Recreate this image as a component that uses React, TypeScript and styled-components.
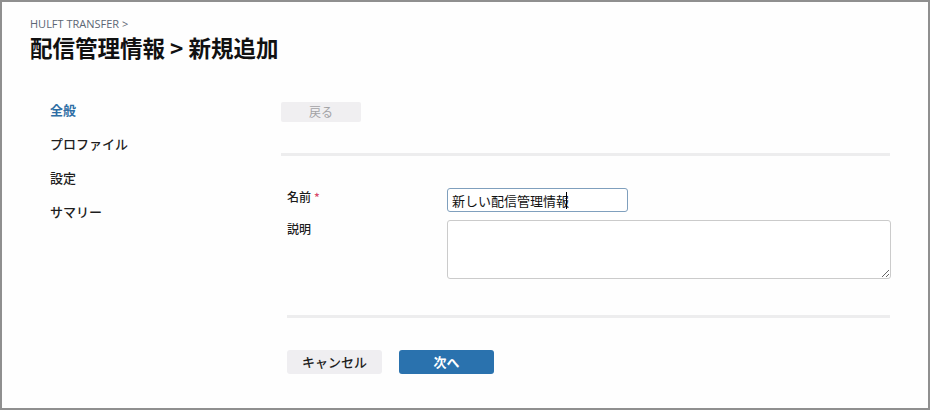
import styled, { createGlobalStyle } from "styled-components";

const GlobalStyle = createGlobalStyle`
  html, body {
    margin: 0;
    padding: 0;
    background: #ffffff;
  }
  body {
    font-family: "Noto Sans CJK JP", "Open Sans", sans-serif;
    color: #222;
  }
`;

const Frame = styled.div`
  box-sizing: border-box;
  width: 930px;
  height: 410px;
  border: 2px solid #8f8f8f;
  padding: 15px 38px 0 28px;
  background: #fefefe;
  overflow: hidden;
`;

const Header = styled.header`
  display: flex;
  flex-direction: column;
`;

const Breadcrumb = styled.div`
  font-family: "Open Sans", "Noto Sans CJK JP", sans-serif;
  font-size: 11px;
  line-height: 14px;
  color: #5c6674;
`;

const Title = styled.h1`
  margin: 1px 0 0;
  font-family: "Noto Sans CJK JP", sans-serif;
  font-size: 22.5px;
  line-height: 30px;
  font-weight: 700;
  color: #111;
`;

const Body = styled.div`
  display: grid;
  grid-template-columns: 251px 609px;
  margin-top: 38px;
`;

const Nav = styled.nav`
  display: flex;
  flex-direction: column;
  gap: 14px;
  padding: 0 0 0 20px;
`;

const NavItem = styled.div<{ active?: boolean }>`
  font-size: 13px;
  line-height: 20px;
  font-weight: ${({ active }) => (active ? 700 : 500)};
  color: ${({ active }) => (active ? "#2e6ea5" : "#1e1e1e")};
`;

const Main = styled.main`
  display: flex;
  flex-direction: column;
  padding-top: 2px;
`;

const Toolbar = styled.div`
  display: flex;
`;

const BackButton = styled.button`
  width: 80px;
  height: 20px;
  padding: 0;
  border: none;
  border-radius: 2px;
  background: #f0eff1;
  color: #a3a3a6;
  font-family: inherit;
  font-size: 12px;
  line-height: 20px;
  cursor: default;
`;

const Divider = styled.hr<{ inset?: number; gapTop?: number }>`
  margin: ${({ gapTop }) => gapTop ?? 31}px 0 0 ${({ inset }) => inset ?? 0}px;
  height: 3px;
  border: none;
  background: #ededee;
`;

const Form = styled.div`
  display: flex;
  flex-direction: column;
  gap: 8px;
  margin-top: 32px;
  padding-left: 6px;
`;

const Row = styled.div`
  display: grid;
  grid-template-columns: 160px 1fr;
  align-items: start;
`;

const Label = styled.label`
  font-size: 12px;
  line-height: 18px;
  font-weight: 500;
  color: #1c1c1c;
`;

const Required = styled.span`
  margin-left: 3px;
  color: #d84a6a;
`;

const InputWrap = styled.div`
  position: relative;
  width: 181px;
`;

const TextInput = styled.input`
  display: block;
  box-sizing: border-box;
  width: 181px;
  height: 24px;
  padding: 0 4px;
  border: 1px solid #7f9fbd;
  border-radius: 3px;
  background: #fff;
  font-family: inherit;
  font-size: 13px;
  color: #111;
  outline: none;
`;

const Caret = styled.span`
  position: absolute;
  left: 119px;
  top: 4px;
  width: 1px;
  height: 17px;
  background: #000;
`;

const TextArea = styled.textarea`
  display: block;
  box-sizing: border-box;
  width: 444px;
  height: 59px;
  border: 1px solid #cbcbcb;
  border-radius: 3px;
  background: #fff;
  font-family: inherit;
  font-size: 13px;
  outline: none;
`;

const Actions = styled.div`
  display: flex;
  gap: 17px;
  margin-top: 32px;
  padding-left: 6px;
`;

const Button = styled.button<{ primary?: boolean }>`
  width: 95px;
  height: 24px;
  padding: 0;
  border: none;
  border-radius: 3px;
  background: ${({ primary }) => (primary ? "#2a72ae" : "#efeef1")};
  color: ${({ primary }) => (primary ? "#ffffff" : "#1d1d1d")};
  font-family: inherit;
  font-size: 13px;
  font-weight: ${({ primary }) => (primary ? 700 : 500)};
  line-height: 24px;
`;

export default function App() {
  return (
    <>
      <GlobalStyle />
      <Frame>
        <Header>
          <Breadcrumb>HULFT TRANSFER &gt;</Breadcrumb>
          <Title>配信管理情報 &gt; 新規追加</Title>
        </Header>
        <Body>
          <Nav>
            <NavItem active>全般</NavItem>
            <NavItem>プロファイル</NavItem>
            <NavItem>設定</NavItem>
            <NavItem>サマリー</NavItem>
          </Nav>
          <Main>
            <Toolbar>
              <BackButton>戻る</BackButton>
            </Toolbar>
            <Divider />
            <Form>
              <Row>
                <Label>
                  名前<Required>*</Required>
                </Label>
                <InputWrap>
                  <TextInput defaultValue="新しい配信管理情報" />
                  <Caret />
                </InputWrap>
              </Row>
              <Row>
                <Label>説明</Label>
                <TextArea />
              </Row>
            </Form>
            <Divider inset={6} gapTop={36} />
            <Actions>
              <Button>キャンセル</Button>
              <Button primary>次へ</Button>
            </Actions>
          </Main>
        </Body>
      </Frame>
    </>
  );
}
